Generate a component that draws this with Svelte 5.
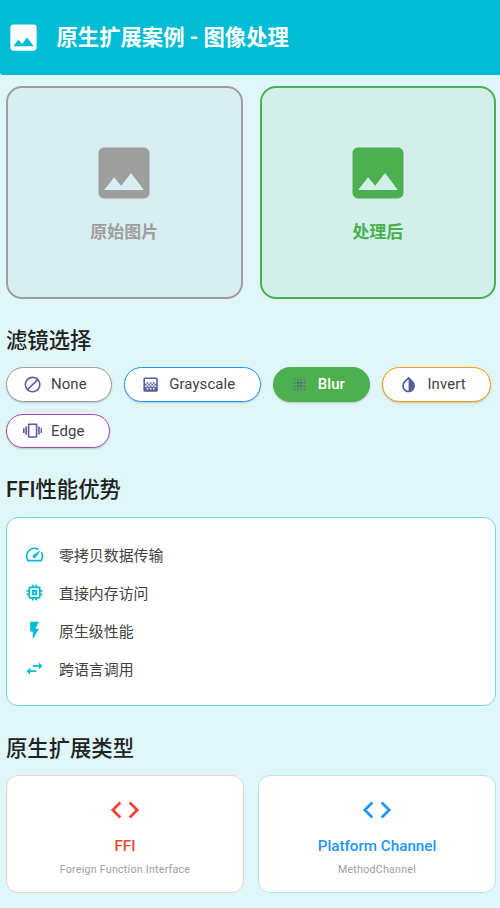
<script>
  const icons = {
    image: "M21 19V5c0-1.1-.9-2-2-2H5c-1.1 0-2 .9-2 2v14c0 1.1.9 2 2 2h14c1.1 0 2-.9 2-2zM8.5 13.5l2.5 3.01L14.5 12l4.5 6H5l3.5-4.5z",
    block: "M12 2C6.48 2 2 6.48 2 12s4.48 10 10 10 10-4.48 10-10S17.52 2 12 2zM4 12c0-4.42 3.58-8 8-8 1.85 0 3.55.63 4.9 1.69L5.69 16.9C4.63 15.55 4 13.85 4 12zm8 8c-1.85 0-3.55-.63-4.9-1.69L18.31 7.1C19.37 8.45 20 10.15 20 12c0 4.42-3.58 8-8 8z",
    gradient: "M11 9h2v2h-2zm-2 2h2v2H9zm4 0h2v2h-2zm2-2h2v2h-2zM7 9h2v2H7zm12-6H5c-1.1 0-2 .9-2 2v14c0 1.1.9 2 2 2h14c1.1 0 2-.9 2-2V5c0-1.1-.9-2-2-2zM9 18H7v-2h2v2zm4 0h-2v-2h2v2zm4 0h-2v-2h2v2zm2-7h-2v2h2v2h-2v-2h-2v2h-2v-2h-2v2H9v-2H7v2H5v-2h2v-2H5V5h14v6z",
    blur: "M6 13c-.55 0-1 .45-1 1s.45 1 1 1 1-.45 1-1-.45-1-1-1zm0 4c-.55 0-1 .45-1 1s.45 1 1 1 1-.45 1-1-.45-1-1-1zm0-8c-.55 0-1 .45-1 1s.45 1 1 1 1-.45 1-1-.45-1-1-1zm-3 .5c-.28 0-.5.22-.5.5s.22.5.5.5.5-.22.5-.5-.22-.5-.5-.5zM6 5c-.55 0-1 .45-1 1s.45 1 1 1 1-.45 1-1-.45-1-1-1zm15 5.5c.28 0 .5-.22.5-.5s-.22-.5-.5-.5-.5.22-.5.5.22.5.5.5zM14 7c.55 0 1-.45 1-1s-.45-1-1-1-1 .45-1 1 .45 1 1 1zm0-3.5c.28 0 .5-.22.5-.5s-.22-.5-.5-.5-.5.22-.5.5.22.5.5.5zm-11 10c-.28 0-.5.22-.5.5s.22.5.5.5.5-.22.5-.5-.22-.5-.5-.5zm7 7c-.28 0-.5.22-.5.5s.22.5.5.5.5-.22.5-.5-.22-.5-.5-.5zm0-17c.28 0 .5-.22.5-.5s-.22-.5-.5-.5-.5.22-.5.5.22.5.5.5zM10 7c.55 0 1-.45 1-1s-.45-1-1-1-1 .45-1 1 .45 1 1 1zm0 5.5c-.83 0-1.5.67-1.5 1.5s.67 1.5 1.5 1.5 1.5-.67 1.5-1.5-.67-1.5-1.5-1.5zm8 .5c-.55 0-1 .45-1 1s.45 1 1 1 1-.45 1-1-.45-1-1-1zm0 4c-.55 0-1 .45-1 1s.45 1 1 1 1-.45 1-1-.45-1-1-1zm0-8c-.55 0-1 .45-1 1s.45 1 1 1 1-.45 1-1-.45-1-1-1zm0-4c-.55 0-1 .45-1 1s.45 1 1 1 1-.45 1-1-.45-1-1-1zm3 8.5c-.28 0-.5.22-.5.5s.22.5.5.5.5-.22.5-.5-.22-.5-.5-.5zM14 17c-.55 0-1 .45-1 1s.45 1 1 1 1-.45 1-1-.45-1-1-1zm0 3.5c-.28 0-.5.22-.5.5s.22.5.5.5.5-.22.5-.5-.22-.5-.5-.5zm-4-12c-.83 0-1.5.67-1.5 1.5s.67 1.5 1.5 1.5 1.5-.67 1.5-1.5-.67-1.5-1.5-1.5zm0 8.5c-.55 0-1 .45-1 1s.45 1 1 1 1-.45 1-1-.45-1-1-1zm4-4.5c-.83 0-1.5.67-1.5 1.5s.67 1.5 1.5 1.5 1.5-.67 1.5-1.5-.67-1.5-1.5-1.5zm0-4c-.83 0-1.5.67-1.5 1.5s.67 1.5 1.5 1.5 1.5-.67 1.5-1.5-.67-1.5-1.5-1.5z",
    invert: "M17.66 7.93L12 2.27 6.34 7.93c-3.12 3.12-3.12 8.19 0 11.31C7.9 20.8 9.95 21.58 12 21.58c2.05 0 4.1-.78 5.66-2.34 3.12-3.12 3.12-8.19 0-11.31zM12 19.59c-1.6 0-3.11-.62-4.24-1.76C6.62 16.69 6 15.19 6 13.59s.62-3.11 1.76-4.24L12 5.1v14.49z",
    vibration: "M0 15h2V9H0v6zm3 2h2V7H3v10zm19-8v6h2V9h-2zm-3 8h2V7h-2v10zM16.5 3h-9C6.67 3 6 3.67 6 4.5v15c0 .83.67 1.5 1.5 1.5h9c.83 0 1.5-.67 1.5-1.5v-15c0-.83-.67-1.5-1.5-1.5zM16 19H8V5h8v14z",
    speed: "M20.38 8.57l-1.23 1.85a8 8 0 0 1-.22 7.58H5.07A8 8 0 0 1 15.58 6.85l1.85-1.23A10 10 0 0 0 3.35 19a2 2 0 0 0 1.72 1h13.85a2 2 0 0 0 1.74-1 10 10 0 0 0-.27-10.44zm-9.79 6.84a2 2 0 0 0 2.83 0l5.66-8.49-8.49 5.66a2 2 0 0 0 0 2.83z",
    memory: "M15 9H9v6h6V9zm-2 4h-2v-2h2v2zm8-2V9h-2V7c0-1.1-.9-2-2-2h-2V3h-2v2h-2V3H9v2H7c-1.1 0-2 .9-2 2v2H3v2h2v2H3v2h2v2c0 1.1.9 2 2 2h2v2h2v-2h2v2h2v-2h2c1.1 0 2-.9 2-2v-2h2v-2h-2v-2h2zm-4 6H7V7h10v10z",
    flash: "M7 2v11h3v9l7-12h-4l4-8z",
    swap: "M6.99 11L3 15l3.99 4v-3H14v-2H6.99v-3zM21 9l-3.99-4v3H10v2h7.01v3L21 9z",
    code: "M9.4 16.6L4.8 12l4.6-4.6L8 6l-6 6 6 6 1.4-1.4zm5.2 0l4.6-4.6-4.6-4.6L16 6l6 6-6 6-1.4-1.4z",
  };

  const filters = [
    { name: "None", icon: "block", cls: "none" },
    { name: "Grayscale", icon: "gradient", cls: "gray" },
    { name: "Blur", icon: "blur", cls: "blur" },
    { name: "Invert", icon: "invert", cls: "invert" },
    { name: "Edge", icon: "vibration", cls: "edge" },
  ];

  const perks = [
    { text: "零拷贝数据传输", icon: "speed" },
    { text: "直接内存访问", icon: "memory" },
    { text: "原生级性能", icon: "flash" },
    { text: "跨语言调用", icon: "swap" },
  ];

  const types = [
    { title: "FFI", sub: "Foreign Function Interface", cls: "red" },
    { title: "Platform Channel", sub: "MethodChannel", cls: "blue" },
  ];
</script>

<header>
  <svg class="head-icon" viewBox="0 0 24 24"><path d={icons.image} /></svg>
  <h1>原生扩展案例 - 图像处理</h1>
</header>

<main>
  <div class="previews">
    <div class="preview before">
      <svg viewBox="0 0 24 24"><path d={icons.image} /></svg>
      <span>原始图片</span>
    </div>
    <div class="preview after">
      <svg viewBox="0 0 24 24"><path d={icons.image} /></svg>
      <span>处理后</span>
    </div>
  </div>

  <h2 class="filters-title">滤镜选择</h2>
  <div class="chips">
    {#each filters as f}
      <div class="chip {f.cls}">
        <svg viewBox="0 0 24 24"><path d={icons[f.icon]} /></svg>
        <span>{f.name}</span>
      </div>
    {/each}
  </div>

  <h2 class="perks-title">FFI性能优势</h2>
  <div class="perks">
    {#each perks as p}
      <div class="perk">
        <svg viewBox="0 0 24 24"><path d={icons[p.icon]} /></svg>
        <span>{p.text}</span>
      </div>
    {/each}
  </div>

  <h2 class="types-title">原生扩展类型</h2>
  <div class="types">
    {#each types as t}
      <div class="type {t.cls}">
        <svg viewBox="0 0 24 24"><path d={icons.code} /></svg>
        <strong>{t.title}</strong>
        <small>{t.sub}</small>
      </div>
    {/each}
  </div>
</main>

<style>
  :global(body) {
    background: #e0f7fa;
    font-family: Roboto, "Noto Sans CJK SC", sans-serif;
    overflow: hidden;
  }

  svg {
    display: block;
    fill: currentColor;
    flex: none;
  }

  header {
    height: 75px;
    background: #00bcd4;
    border-radius: 0 0 0 3px;
    display: flex;
    align-items: center;
    padding-left: 6px;
    box-sizing: border-box;
    color: #fff;
  }

  .head-icon {
    width: 35px;
    height: 35px;
  }

  h1 {
    margin: 0 0 0 15.5px;
    font-size: 21.33px;
    font-weight: 700;
    line-height: 28px;
  }

  main {
    padding: 11px 4px 0 6px;
  }

  .previews {
    display: flex;
    justify-content: space-between;
  }

  .preview {
    width: 236.5px;
    height: 213px;
    box-sizing: border-box;
    padding-bottom: 1.5px;
    border: 2px solid;
    border-radius: 16px;
    display: flex;
    flex-direction: column;
    align-items: center;
    justify-content: center;
    font-size: 17px;
    font-weight: 700;
  }

  .preview svg {
    width: 68px;
    height: 68px;
    margin-bottom: 13px;
  }

  .preview span {
    line-height: 24px;
  }

  .before {
    color: #9e9e9e;
    background: #d8eef1;
  }

  .after {
    color: #4caf50;
    background: #d2f0e9;
  }

  h2 {
    margin: 0;
    font-size: 21.33px;
    font-weight: 500;
    line-height: 28px;
    color: #212121;
  }

  .filters-title {
    margin-top: 28px;
  }

  .chips {
    display: flex;
    flex-wrap: wrap;
    gap: 12px;
    margin-top: 12px;
  }

  .chip {
    height: 34.5px;
    box-sizing: border-box;
    display: flex;
    align-items: center;
    gap: 8.8px;
    padding: 0 24.5px 0 16px;
    background: #fff;
    border: 1px solid;
    border-radius: 18px;
    box-shadow: 0 1px 2px rgba(0, 0, 0, 0.2);
    font-size: 14.93px;
    letter-spacing: 0.1px;
    color: #424242;
  }

  .chip svg {
    width: 19.2px;
    height: 19.2px;
    color: #565e9e;
  }

  .chip.none { border-color: #9e9e9e; }
  .chip.gray { border-color: #2196f3; }
  .chip.invert { border-color: #ff9800; }
  .chip.edge { border-color: #ab47bc; }

  .chip.blur {
    background: #4caf50;
    border-color: #4caf50;
    color: #fff;
    font-weight: 500;
  }

  .perks-title {
    margin-top: 28px;
  }

  .perks {
    margin-top: 13px;
    height: 189px;
    box-sizing: border-box;
    padding: 17.5px 17px;
    display: flex;
    flex-direction: column;
    background: #fff;
    border: 1px solid #6fd8e6;
    border-radius: 12px;
  }

  .perk {
    height: 38px;
    flex: none;
    display: flex;
    align-items: center;
    gap: 14px;
    font-size: 14.93px;
    color: #424242;
  }

  .perk svg {
    width: 21px;
    height: 21px;
    color: #00bcd4;
  }

  .types-title {
    margin-top: 29px;
  }

  .types {
    display: flex;
    justify-content: space-between;
    margin-top: 12px;
  }

  .type {
    width: 238px;
    height: 118px;
    box-sizing: border-box;
    padding-top: 17px;
    display: flex;
    flex-direction: column;
    align-items: center;
    background: #fff;
    border: 1px solid;
    border-radius: 12px;
  }

  .type svg {
    width: 34px;
    height: 34px;
  }

  .type strong {
    margin-top: 9px;
    font-size: 15.2px;
    font-weight: 500;
    line-height: 20px;
  }

  .type small {
    margin-top: 7px;
    font-size: 10.67px;
    line-height: 14px;
    letter-spacing: 0.24px;
    color: #9e9e9e;
  }

  .red {
    color: #f44336;
    border-color: #fbcac6;
  }

  .blue {
    color: #2196f3;
    border-color: #bcdffb;
  }
</style>
